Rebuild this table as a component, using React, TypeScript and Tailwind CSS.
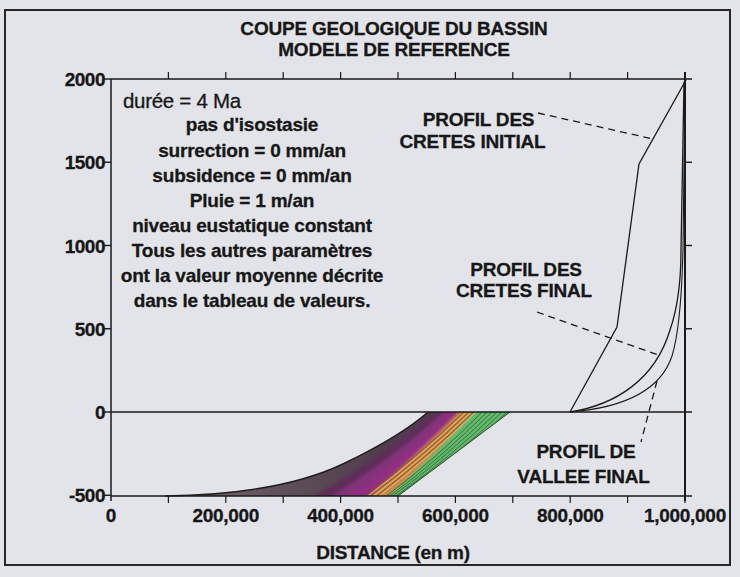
import React from "react";

const X = (d: number) => 111 + (d * 574) / 1e6;
const Y = (v: number) => 412 - (v * 83.25) / 500;

const yTicks = [2000, 1500, 1000, 500, 0, -500];
const xTickVals = [100000, 200000, 300000, 400000, 500000, 600000, 700000, 800000, 900000, 1000000];
const xLabels: [number, string][] = [
  [0, "0"],
  [200000, "200,000"],
  [400000, "400,000"],
  [600000, "600,000"],
  [800000, "800,000"],
  [1000000, "1,000,000"],
];

const body: [string, number][] = [
  ["pas d'isostasie", 130.5],
  ["surrection = 0 mm/an", 156.5],
  ["subsidence = 0 mm/an", 181.5],
  ["Pluie = 1 m/an", 206.5],
  ["niveau eustatique constant", 231.5],
  ["Tous les autres paramètres", 256.5],
  ["ont la valeur moyenne décrite", 281.5],
  ["dans le tableau de valeurs.", 306.5],
];

const labels: [string, number, number][] = [
  ["PROFIL DES", 478.5, 126],
  ["CRETES INITIAL", 472.5, 147.5],
  ["PROFIL DES", 526, 276],
  ["CRETES FINAL", 524, 297],
  ["PROFIL DE", 586, 458],
  ["VALLEE FINAL", 583.5, 483],
];

const wedge =
  "M165 496 C 240 495 300 485 345 463 C 380 446 410 428 428 412 L510 412 L398 496 Z";

export default function App() {
  const ink = "#1a1a1a";
  return (
    <div className="w-[740px] h-[577px] bg-[#e3e4e9] pt-[9px] pl-[4px] font-['Liberation_Sans',Arial,sans-serif] text-[#171717]">
      <div className="w-[727px] h-[557px] border-2 border-[#262626] flex flex-col">
        <div className="h-[49px] pt-[6.5px] pl-[53px] text-center text-[19px] leading-[21px] font-bold tracking-[-0.2px] [-webkit-text-stroke:0.3px_#171717]">
          <div>COUPE GEOLOGIQUE DU BASSIN</div>
          <div>MODELE DE REFERENCE</div>
        </div>
        <svg width="723" height="504" viewBox="6 60 723 504" className="block">
          <defs>
            <clipPath id="wedgeClip">
              <path d={wedge} />
            </clipPath>
            <linearGradient id="darkGrad" x1="165" y1="0" x2="460" y2="0" gradientUnits="userSpaceOnUse">
              <stop offset="0" stopColor="#7d6a75" />
              <stop offset="0.4" stopColor="#5f4f5a" />
              <stop offset="0.75" stopColor="#4f3e4b" />
              <stop offset="1" stopColor="#563551" />
            </linearGradient>
            <filter id="soft" x="-10%" y="-10%" width="120%" height="120%">
              <feGaussianBlur stdDeviation="1.8" />
            </filter>
          </defs>

          {/* sediment wedge */}
          <g clipPath="url(#wedgeClip)">
            <rect x="150" y="400" width="400" height="110" fill="url(#darkGrad)" />
            <g filter="url(#soft)">
              <path d="M440 408 Q 385 455 300 504 L 600 504 L 600 400 Z" fill="#5e2f58" />
              <path d="M448 408 Q 398 455 320 504 L 600 504 L 600 400 Z" fill="#84307a" />
              <path d="M456 408 Q 410 455 340 504 L 600 504 L 600 400 Z" fill="#932f83" />
              <path d="M463 408 Q 418 455 360 504 L 600 504 L 600 400 Z" fill="#c9884c" />
              <path d="M478 408 Q 433 457 380 504 L 600 504 L 600 400 Z" fill="#62b96c" />
            </g>
            {[0, 1, 2, 3, 4, 5].map((i) => (
              <path
                key={"o" + i}
                d={`M${464 + i * 2.4} 412 Q ${420 + i * 2.4} 455 ${362 + i * 3} 498`}
                fill="none"
                stroke={i % 2 ? "#f4c86c" : "#7a4522"}
                strokeWidth="0.8"
              />
            ))}
            {[0, 1, 2, 3, 4, 5].map((i) => (
              <path
                key={"g" + i}
                d={`M${482 + i * 5} 412 Q ${438 + i * 4.5} 457 ${384 + i * 3} 498`}
                fill="none"
                stroke="#2c5f34"
                strokeWidth="0.8"
              />
            ))}
          </g>
          <path
            d="M165 496 C 240 495 300 485 345 463 C 380 446 410 428 428 412"
            fill="none"
            stroke="#1e1e1e"
            strokeWidth="1.4"
          />
          <path d="M510 412 L398 496" fill="none" stroke="#2c4f30" strokeWidth="1" />

          {/* axes */}
          <g stroke={ink} fill="none">
            <path d="M111 79 H692" strokeWidth="1.5" />
            <path d="M111 412 H692" strokeWidth="1.5" />
            <path d="M111 496 H692" strokeWidth="1.5" />
            <path d="M111 79 V501" strokeWidth="1.5" />
            <path d="M685 72 V501" strokeWidth="2" />
            {yTicks.map((v) => (
              <path key={"yt" + v} d={`M103 ${Y(v)} H111`} strokeWidth="1.4" />
            ))}
            {[1500, 1000, 500].map((v) => (
              <path key={"yr" + v} d={`M685 ${Y(v)} H692`} strokeWidth="1.4" />
            ))}
            {xTickVals.map((d) => (
              <g key={"xt" + d}>
                <path d={`M${X(d)} 72 V79`} strokeWidth="1.2" />
                <path d={`M${X(d)} 496 V503`} strokeWidth="1.2" />
              </g>
            ))}
          </g>

          {/* profiles */}
          <g fill="none" stroke={ink} strokeWidth="1.3">
            <path d="M570 412 L617 327 L639 164 L686 80" />
            <path d="M570 412 C 615 405 655 380 670 330 C 677 310 681 280 681 250 L684 82" />
            <path d="M570 412 C 620 408 660 392 672 356 C 680 330 682 290 683 250 L685 82" strokeWidth="1.1" />
          </g>
          <g fill="none" stroke={ink} strokeWidth="1.3" strokeDasharray="7 5">
            <path d="M538 113 L653 139" />
            <path d="M537 312 L661 356" />
            <path d="M657 381 L641 442" />
          </g>

          {/* axis labels */}
          <g fontWeight="700" fontSize="19" fill="#171717" stroke="#171717" strokeWidth="0.3">
            {yTicks.map((v) => (
              <text key={"yl" + v} x="105" y={Y(v) + 7} textAnchor="end" letterSpacing="-0.5">
                {v}
              </text>
            ))}
            {xLabels.map(([d, s]) => (
              <text key={"xl" + d} x={X(d)} y="522" textAnchor="middle" letterSpacing="-0.3">
                {s}
              </text>
            ))}
            <text x="393" y="559" textAnchor="middle" letterSpacing="-0.3">
              DISTANCE (en m)
            </text>
          </g>

          {/* text block */}
          <text x="123" y="108" fontSize="20.5" fill="#171717" stroke="#171717" strokeWidth="0.3" letterSpacing="-0.3">
            durée = 4 Ma
          </text>
          <g fontWeight="700" fontSize="19" fill="#171717" stroke="#171717" strokeWidth="0.3" textAnchor="middle" letterSpacing="-0.2">
            {body.map(([s, y]) => (
              <text key={s} x="252" y={y}>
                {s}
              </text>
            ))}
            {labels.map(([s, x, y], i) => (
              <text key={"lb" + i} x={x} y={y}>
                {s}
              </text>
            ))}
          </g>
        </svg>
      </div>
    </div>
  );
}
